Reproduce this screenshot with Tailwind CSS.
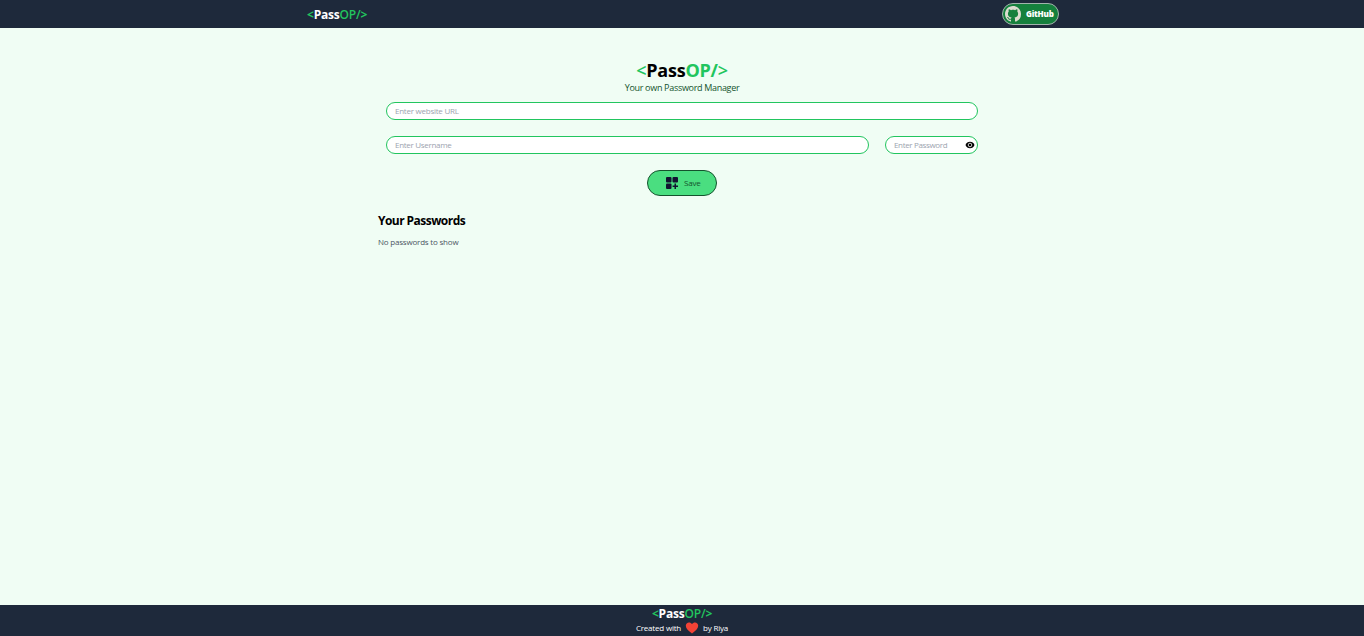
<!DOCTYPE html>
<html lang="en">
<head>
<meta charset="utf-8">
<title>PassOP</title>
<script src="https://cdn.jsdelivr.net/npm/@tailwindcss/browser@4"></script>
</head>
<body class="flex h-screen flex-col overflow-hidden bg-[#f0fdf4] font-['Open_Sans','Noto_Sans',sans-serif] text-[8px] leading-3 text-black">
<nav class="h-7 shrink-0 bg-[#1e293b] text-white">
  <div class="mx-auto flex h-7 w-[752px] items-center justify-between">
    <div class="pt-0.5 pl-px text-[12px] leading-4 font-bold tracking-[-0.2px] whitespace-nowrap"><span class="text-[#22c55e]">&lt;</span>Pass<span class="font-semibold text-[#22c55e]">OP/</span><span class="text-[#22c55e]">&gt;</span></div>
    <button class="-mr-px flex h-[22px] w-[57px] items-center rounded-full border border-[#a1b3ac] bg-[#15803d] pl-[2px]">
      <svg class="size-4 shrink-0" viewBox="0 0 16 16" fill="#dcdcd0"><path d="M8 0C3.58 0 0 3.58 0 8c0 3.54 2.29 6.53 5.47 7.59.4.07.55-.17.55-.38 0-.19-.01-.82-.01-1.49-2.01.37-2.53-.49-2.69-.94-.09-.23-.48-.94-.82-1.13-.28-.15-.68-.52-.01-.53.63-.01 1.08.58 1.23.82.72 1.21 1.87.87 2.33.66.07-.52.28-.87.51-1.07-1.78-.2-3.64-.89-3.64-3.95 0-.87.31-1.59.82-2.15-.08-.2-.36-1.02.08-2.12 0 0 .67-.21 2.2.82.64-.18 1.32-.27 2-.27s1.36.09 2 .27c1.53-1.04 2.2-.82 2.2-.82.44 1.1.16 1.92.08 2.12.51.56.82 1.27.82 2.15 0 3.07-1.87 3.75-3.65 3.95.29.25.54.73.54 1.48 0 1.07-.01 1.93-.01 2.2 0 .21.15.46.55.38A8.01 8.01 0 0 0 16 8c0-4.42-3.58-8-8-8z"/></svg>
      <span class="ml-[5px] text-[8px] leading-3 font-extrabold tracking-[-0.2px]">GitHub</span>
    </button>
  </div>
</nav>
<main class="mx-auto w-[608px] flex-1 pt-[31px]">
  <h1 class="text-center text-[18px] leading-[22px] font-bold tracking-[-0.25px]"><span class="font-semibold text-[#22c55e]">&lt;</span>Pass<span class="text-[#22c55e]">OP/</span><span class="font-semibold text-[#22c55e]">&gt;</span></h1>
  <p class="text-center text-[9px] leading-[14px] tracking-[-0.31px] text-[#14532d]">Your own Password Manager</p>
  <div class="flex flex-col items-center gap-4 px-2 pt-[7px]">
    <input class="h-[18px] w-full rounded-full border border-[#22c55e] bg-white px-2 pb-[2px] tracking-[-0.25px] placeholder:text-[#9ca3af]" placeholder="Enter website URL">
    <div class="flex w-full gap-4">
      <input class="h-[18px] w-[483px] rounded-full border border-[#22c55e] bg-white px-2 pb-[2px] tracking-[-0.3px] placeholder:text-[#9ca3af]" placeholder="Enter Username">
      <div class="relative w-[93px]">
        <input class="block h-[18px] w-full rounded-full border border-[#22c55e] bg-white px-2 pb-[2px] tracking-[-0.35px] placeholder:text-[#9ca3af]" placeholder="Enter Password">
        <svg class="absolute top-[4px] right-[3px] h-[10px] w-[10px]" viewBox="0 0 10 10"><path d="M.5 5C1.4 2.9 3 1.8 5 1.8S8.600 2.900 9.500 5C8.600 7.100 7 8.200 5 8.200S1.400 7.100 .5 5Z"/><circle cx="5" cy="5" r="1.800" fill="none" stroke="white" stroke-width=".8"/></svg>
      </div>
    </div>
    <button class="flex h-[26px] w-[70px] items-center rounded-full border border-[#14532d] bg-[#4ade80] pl-[18px]">
      <svg class="size-3 shrink-0" viewBox="0 0 12 12" fill="#121331"><rect width="5.500" height="5.500" rx="1"/><rect x="6.500" width="5.500" height="5.500" rx="1"/><rect y="6.500" width="5.500" height="5.500" rx="1"/><path d="M8.500 6.600h1.500v2h2v1.500h-2v1.900H8.500v-1.900H6.600V8.600h1.900z"/></svg>
      <span class="ml-[6px] tracking-[-0.2px] text-[#14532d]">Save</span>
    </button>
  </div>
  <h2 class="pt-[17px] text-[12px] leading-4 font-bold tracking-[-0.55px]">Your Passwords</h2>
  <p class="pt-[7px] tracking-[-0.2px] text-[#4b5563]">No passwords to show</p>
</main>
<footer class="flex h-[31px] shrink-0 flex-col items-center bg-[#1e293b] text-white">
  <div class="mt-px text-[12px] leading-4 font-bold tracking-[-0.2px]"><span class="text-[#22c55e]">&lt;</span>Pass<span class="font-semibold text-[#22c55e]">OP/</span><span class="text-[#22c55e]">&gt;</span></div>
  <div class="-mt-px flex h-[13px] items-center font-medium tracking-[-0.2px]">Created with
    <svg class="mx-1 h-[14px] w-[14px]" viewBox="0 0 14 14" fill="#f44336"><path d="M7 12.500C3.500 9.800.8 7.600.8 4.800.8 2.900 2.200 1.500 4 1.500c1.200 0 2.300.6 3 1.600.7-1 1.800-1.600 3-1.600 1.800 0 3.200 1.400 3.200 3.300 0 2.800-2.700 5-6.200 7.700z"/></svg>
    by Riya</div>
</footer>
</body>
</html>
